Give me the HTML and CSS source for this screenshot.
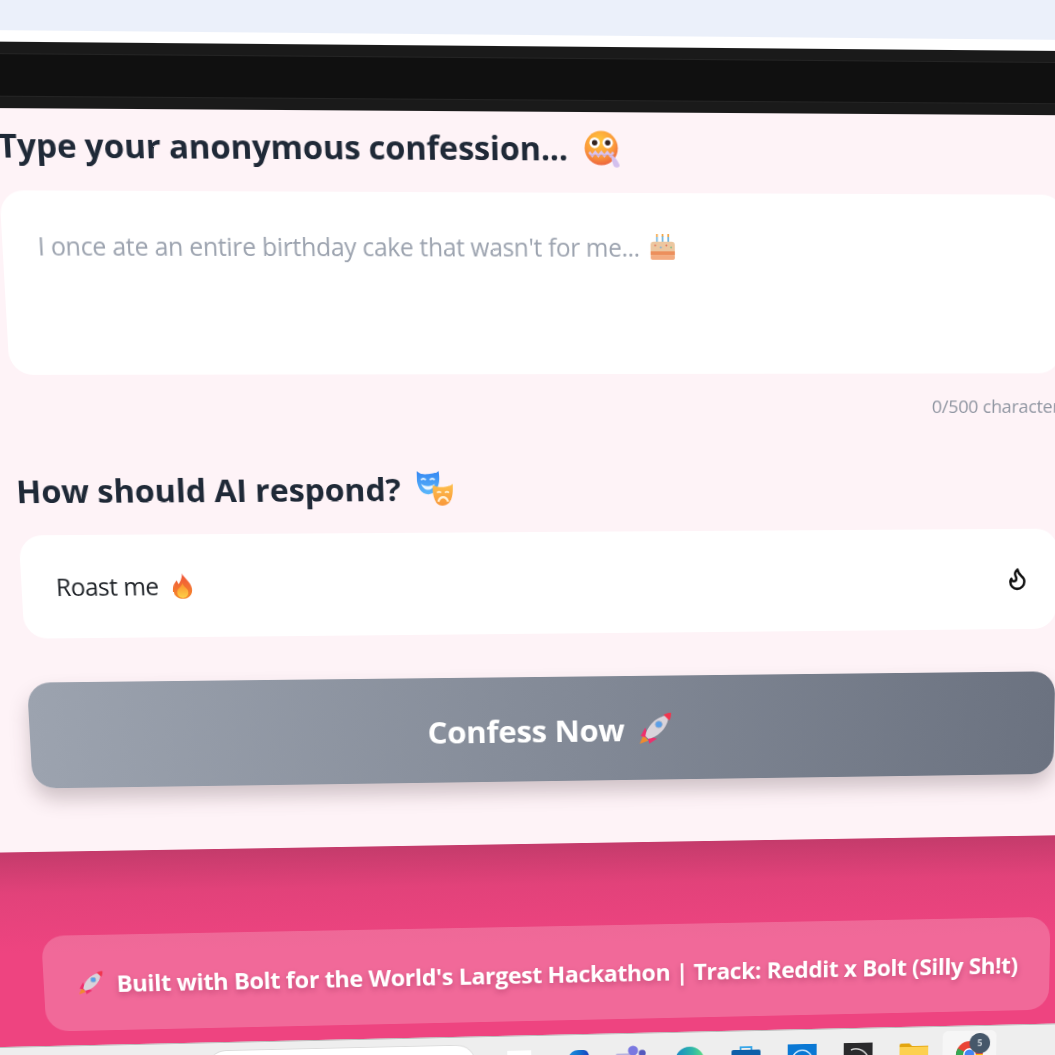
FILE: index.html
```html
<!DOCTYPE html>
<html lang="en">
<head>
<meta charset="utf-8">
<title>Anonymous confession</title>
<link rel="stylesheet" href="styles.css">
</head>
<body>
<svg class="defs" width="0" height="0" aria-hidden="true">
  <defs>
    <radialGradient id="gFace" cx="45%" cy="30%" r="75%"><stop offset="0" stop-color="#ffc83d"/><stop offset=".6" stop-color="#fb9a3a"/><stop offset="1" stop-color="#ea5a3f"/></radialGradient>
    <linearGradient id="gFire" x1="0" y1="0" x2="0" y2="1"><stop offset="0" stop-color="#f0523a"/><stop offset="1" stop-color="#f58a2a"/></linearGradient>
    <linearGradient id="gFire2" x1="0" y1="0" x2="0" y2="1"><stop offset="0" stop-color="#fb8f2c"/><stop offset="1" stop-color="#fdd047"/></linearGradient>
    <linearGradient id="gBlue" x1="0" y1="0" x2="0" y2="1"><stop offset="0" stop-color="#3586f2"/><stop offset="1" stop-color="#5cb8fb"/></linearGradient>
    <linearGradient id="gGold" x1="0" y1="0" x2="0" y2="1"><stop offset="0" stop-color="#fdc04c"/><stop offset="1" stop-color="#f9973a"/></linearGradient>
    <linearGradient id="gEdge" x1="0" y1="0" x2="1" y2="0"><stop offset="0" stop-color="#1687c8"/><stop offset=".6" stop-color="#2fb7a8"/><stop offset="1" stop-color="#5fe07f"/></linearGradient>
    <linearGradient id="gCopilot" x1="0" y1="0" x2="1" y2="0"><stop offset="0" stop-color="#2a9ae6"/><stop offset=".6" stop-color="#1273cf"/><stop offset="1" stop-color="#1a3fc0"/></linearGradient>
    <symbol id="rocket" viewBox="0 0 36 36">
      <path d="M6 24 L2 33 L11 30 Z" fill="#f08a2e"/>
      <path d="M8 16 L3 25 L11 27 Z" fill="#ee2f6d"/>
      <path d="M20 28 L12 33 L10 25 Z" fill="#ee2f6d"/>
      <path d="M8 25 C9 16 18 6 29 4 L32 7 C30 18 20 27 11 28 Z" fill="#d9d3da"/>
      <path d="M27 3 C30 1 34 1 35 1 C35 3 35 6 33 9 Z" fill="#f0364f"/>
      <circle cx="22" cy="13" r="3.6" fill="#5b9fe8" stroke="#a8b6cc" stroke-width="1"/>
    </symbol>
  </defs>
</svg>
<main class="viewport">
  <div class="screen">
    <div class="browser-top"></div>
    <div class="browser-gap"></div>
    <header class="navbar">
      <div class="navbar-band"></div>
      <div class="navbar-core"></div>
      <div class="navbar-band"></div>
    </header>

    <section class="card">
      <h2 class="heading heading-first">Type your anonymous confession...
        <svg class="emoji emoji-lg" viewBox="0 0 36 36"><circle cx="17" cy="17" r="16.5" fill="url(#gFace)"/><circle cx="10.500" cy="12" r="5.200" fill="#fff"/><circle cx="23.500" cy="12" r="5.200" fill="#fff"/><circle cx="10.500" cy="12" r="2.700" fill="#33241f"/><circle cx="23.500" cy="12" r="2.700" fill="#33241f"/><path d="M5 21 l3 3.500 3-3.500 3 3.500 3-3.500 3 3.500 3-3.500 3 3.500 3-3.500" fill="none" stroke="#d8c4f0" stroke-width="2.400"/><path d="M6 24 l24 0" stroke="#c98a9a" stroke-width="1" opacity=".5"/><path d="M26 24 C29 23 33 29 35 33 C36 36 31 37 29 34 Z" fill="#d3c0ee"/></svg>
      </h2>

      <div class="textarea">
        <span class="placeholder">I once ate an entire birthday cake that wasn't for me...
          <svg class="emoji emoji-cake" viewBox="0 0 28 28"><path d="M8 3v6M14 2v7M20 3v6" stroke="#6fb3dc" stroke-width="1.800"/><path d="M8 0v3M14 0v2.500M20 0v3" stroke="#f3a13c" stroke-width="1.800"/><rect x="1" y="8" width="26" height="19" rx="3.500" fill="#ecc7a0"/><circle cx="6" cy="12" r="1" fill="#e2785f"/><circle cx="12" cy="14" r="1" fill="#7fb0d8"/><circle cx="18" cy="12" r="1" fill="#e2785f"/><circle cx="23" cy="14" r="1" fill="#8ac08a"/><rect x="1" y="18" width="26" height="4" fill="#ec8f5c"/><rect x="1" y="22" width="26" height="5" rx="2.500" fill="#f3ab80"/></svg>
        </span>
      </div>
      <p class="counter">0/500 characters</p>

      <h2 class="heading heading-second">How should AI respond?
        <svg class="emoji emoji-lg" viewBox="0 0 36 36"><path d="M0 0 C2 2 4 3 5 3 C9 4 14 3 18 2 C20 2 21 1 22 0 C23 7 23 14 19 19 C15 25 7 25 3 19 C0 14 -1 7 0 0 Z" fill="url(#gBlue)"/><path d="M4 9 q2.500-2.500 5 0M13 9 q2.500-2.500 5 0" fill="none" stroke="#e4f3ff" stroke-width="1.700"/><path d="M4 13 C7 21 15 21 18 13 C15 16 7 16 4 13 Z" fill="#eaf6ff"/><path d="M16 14 C18 15 19 16 21 16 C25 17 29 16 32 15 C34 15 35 14 36 13 C36 20 36 27 32 32 C28 36 22 36 19 32 C16 27 15 20 16 14 Z" fill="url(#gGold)"/><path d="M20 22 q2-2 4 0M28 22 q2-2 4 0" fill="none" stroke="#fff1d6" stroke-width="1.600"/><path d="M21 31 C23 25 29 25 31 31" fill="none" stroke="#fff1d6" stroke-width="2.200"/></svg>
      </h2>

      <div class="select">
        <span class="select-value">Roast me
          <svg class="emoji emoji-fire" viewBox="0 0 22 28"><path d="M11 0 C12 5 20 9 21 17 C22 24 17 28 11 28 C5 28 0 24 1 17 C1 13 3 10 5 8 C6 10 6 11 7 12 C9 9 11 5 11 0 Z" fill="url(#gFire)"/><path d="M11 11 C12 15 17 17 17 21 C17 25 14 27 11 27 C8 27 5 25 5 21 C5 17 10 15 11 11 Z" fill="url(#gFire2)"/></svg>
        </span>
        <svg class="select-icon" viewBox="0 0 24 24" fill="none" stroke="#111" stroke-width="2.400" stroke-linecap="round" stroke-linejoin="round"><path d="M8.500 14.500A2.500 2.500 0 0 0 11 12c0-1.380-.5-2-1-3-1.072-2.143-.224-4.054 2-6 .5 2.500 2 4.900 4 6.500 2 1.600 3 3.500 3 5.500a7 7 0 1 1-14 0c0-1.153.433-2.294 1-3a2.500 2.500 0 0 0 2.500 2.500z"/></svg>
      </div>

      <button class="confess" type="button">Confess Now
        <svg class="emoji emoji-rocket"><use href="#rocket"/></svg>
      </button>
    </section>

    <footer class="hot">
      <div class="banner">
        <svg class="emoji emoji-small"><use href="#rocket"/></svg>
        <span>Built with Bolt for the World's Largest Hackathon | Track: Reddit x Bolt (Silly Sh!t)</span>
      </div>
    </footer>

    <nav class="taskbar">
      <div class="search"></div>
      <div class="tray">
        <span class="tile"><svg viewBox="0 0 32 32"><rect x="3" y="0" width="26" height="32" fill="#fff"/></svg></span>
        <span class="tile"><svg viewBox="0 0 32 32"><path d="M2 32 C4 12 8 1 18 1 H24 C28 1 30 5 30 10 V32 Z" fill="url(#gCopilot)"/></svg></span>
        <span class="tile"><svg viewBox="0 0 32 32"><rect x="-3" y="6" width="20" height="26" rx="2" fill="#b6b3de"/><circle cx="16" cy="3" r="5.500" fill="#7a78e0"/><circle cx="26" cy="6" r="3.800" fill="#5459bd"/><rect x="10" y="8" width="20" height="24" rx="3" fill="#6268d0"/></svg></span>
        <span class="tile"><svg viewBox="0 0 32 32"><circle cx="16" cy="16" r="16" fill="url(#gEdge)"/></svg></span>
        <span class="tile"><svg viewBox="0 0 32 32"><path d="M10 6 V2 H22 V6" fill="none" stroke="#38a6e8" stroke-width="2"/><rect x="0" y="5" width="32" height="27" rx="2" fill="#0e5fa8"/></svg></span>
        <span class="tile"><svg viewBox="0 0 32 32"><rect width="32" height="32" fill="#0a78d4"/><circle cx="16" cy="18" r="11" fill="none" stroke="#d5ecff" stroke-width="1.500"/></svg></span>
        <span class="tile"><svg viewBox="0 0 32 32"><rect width="32" height="32" fill="#2a2a2c"/><path d="M8 8 C14 5 22 7 27 16" fill="none" stroke="#ddd" stroke-width="1.500"/></svg></span>
        <span class="tile"><svg viewBox="0 0 32 32"><path d="M0 4 a2 2 0 0 1 2-2 H11 L14 5 H32 V32 H0 Z" fill="#e3a50e"/><rect x="0" y="6" width="32" height="26" fill="#fdd04f"/></svg></span>
        <span class="tile tile-active"><svg viewBox="0 0 32 32"><circle cx="16" cy="16" r="15" fill="#ea4335"/><path d="M16 16 L3 24 A15 15 0 0 1 3 9 Z" fill="#34a853"/><path d="M16 16 L31 16 A15 15 0 0 1 20 31 Z" fill="#fbbc05"/><circle cx="16" cy="16" r="7" fill="#fff"/><circle cx="16" cy="16" r="5.500" fill="#4285f4"/></svg><b class="badge">5</b></span>
      </div>
    </nav>
  </div>
</main>
</body>
</html>
```
FILE: styles.css
```css
html, body { margin: 0; padding: 0; background: #eeeeee; }
.defs { position: absolute; }

.viewport {
  width: 1055px;
  height: 1055px;
  overflow: hidden;
  filter: blur(0.65px);
}

.screen {
  width: 1240px;
  display: flex;
  flex-direction: column;
  font-family: "Open Sans", "Noto Sans", sans-serif;
  transform-origin: 0 0;
  transform: translate(8px, 345px) matrix3d(1.001,-0.0006,0,0.000031, 0.056,1,0,0.0000715, 0,0,1,0, 0,0,0,1) translate(-100px, -350px);
}

.browser-top { height: 42.3px; background: #ebf0fa; }
.browser-gap { height: 11px; background: #ffffff; }

.navbar { height: 64px; display: flex; flex-direction: column; background: #111111; }
.navbar-band { height: 11px; background: #1a1a1a; }
.navbar-core { flex: 1; background: #101010; border-top: 1px solid #242424; border-bottom: 1px solid #242424; }

.card {
  background: #fef3f7;
  padding: 16px 52px 68px 100px;
  display: flex;
  flex-direction: column;
  height: 759px;
  box-sizing: border-box;
}

.heading {
  margin: 0;
  height: 40px;
  line-height: 40px;
  font-size: 33px;
  font-weight: 700;
  color: #1f2937;
  letter-spacing: -0.2px;
  white-space: nowrap;
  display: flex;
  align-items: center;
  gap: 17px;
}
.heading-first { padding-left: 1px; }

.emoji { flex: none; vertical-align: middle; }
.emoji-lg { width: 37px; height: 37px; }
.emoji-cake { width: 27px; height: 27px; margin-left: 10px; }
.emoji-fire { width: 21px; height: 27px; margin-left: 14px; }
.emoji-rocket { width: 37px; height: 37px; margin-left: 14px; }
.emoji-small { width: 28px; height: 28px; }

.textarea {
  margin-top: 24px;
  height: 183px;
  box-sizing: border-box;
  padding: 37px 35px 0;
  background: #ffffff;
  border-radius: 24px;
}
.placeholder {
  display: flex;
  align-items: center;
  font-size: 25px;
  line-height: 34px;
  color: #9ca3af;
  white-space: nowrap;
  letter-spacing: -0.3px;
}

.counter {
  margin: 22px -8px 0 0;
  height: 24px;
  line-height: 24px;
  font-size: 19px;
  text-align: right;
  color: #8f95a1;
  letter-spacing: -0.2px;
}

.heading-second { margin-top: 52px; letter-spacing: -0.1px; }

.select {
  margin-top: 25px;
  height: 107px;
  box-sizing: border-box;
  padding: 0 30px 0 35px;
  background: #ffffff;
  border-radius: 24px;
  display: flex;
  align-items: center;
  justify-content: space-between;
}
.select-value {
  display: flex;
  align-items: center;
  font-size: 25px;
  color: #1f2328;
  letter-spacing: -0.5px;
}
.select-icon { width: 26px; height: 26px; }

.confess {
  margin-top: 46px;
  height: 113px;
  padding: 3px 0 0;
  border: 0;
  border-radius: 24px;
  background: linear-gradient(90deg, #9ca3af, #6b7280);
  box-shadow: 0 12px 20px rgba(70, 50, 60, .25);
  color: #ffffff;
  font-family: inherit;
  font-size: 33px;
  font-weight: 700;
  letter-spacing: -0.3px;
  display: flex;
  align-items: center;
  justify-content: center;
}

.hot {
  height: 212px;
  box-sizing: border-box;
  padding: 91px 52px 0 100px;
  background: linear-gradient(180deg, #c43b6b 0, #e2427a 45px, #ee4480 110px);
}
.banner {
  height: 105px;
  border-radius: 24px;
  background: rgba(255, 255, 255, .2);
  color: #ffffff;
  font-size: 25px;
  font-weight: 700;
  letter-spacing: -0.42px;
  white-space: nowrap;
  text-shadow: 0 3px 6px rgba(120, 20, 60, .35);
  display: flex;
  align-items: center;
  justify-content: center;
  gap: 13px;
}

.taskbar {
  height: 90px;
  background: #eeeeee;
  border-top: 1px solid #b9b9b9;
  box-sizing: border-box;
  display: flex;
  align-items: flex-start;
  padding-left: 269px;
}
.search {
  width: 287px;
  height: 40px;
  margin-top: 9px;
  background: #ffffff;
  border-radius: 20px;
  box-shadow: 0 0 0 1px #dcdcdc;
}
.tray {
  margin-left: 32px;
  display: flex;
  gap: 30px;
  padding-top: 16px;
}
.tile { position: relative; display: block; width: 32px; height: 32px; }
.tile svg { display: block; width: 32px; height: 32px; overflow: visible; }
.tile-active::before {
  content: "";
  position: absolute;
  left: -14px;
  right: -14px;
  top: -11px;
  height: 60px;
  background: #f6f6f6;
  border-radius: 6px;
}
.tile-active svg { position: relative; }
.badge {
  position: absolute;
  left: 16px;
  top: -8px;
  width: 23px;
  height: 23px;
  border-radius: 50%;
  background: #46586a;
  color: #c4ccd2;
  font-size: 10px;
  line-height: 23px;
  text-align: center;
}
```
